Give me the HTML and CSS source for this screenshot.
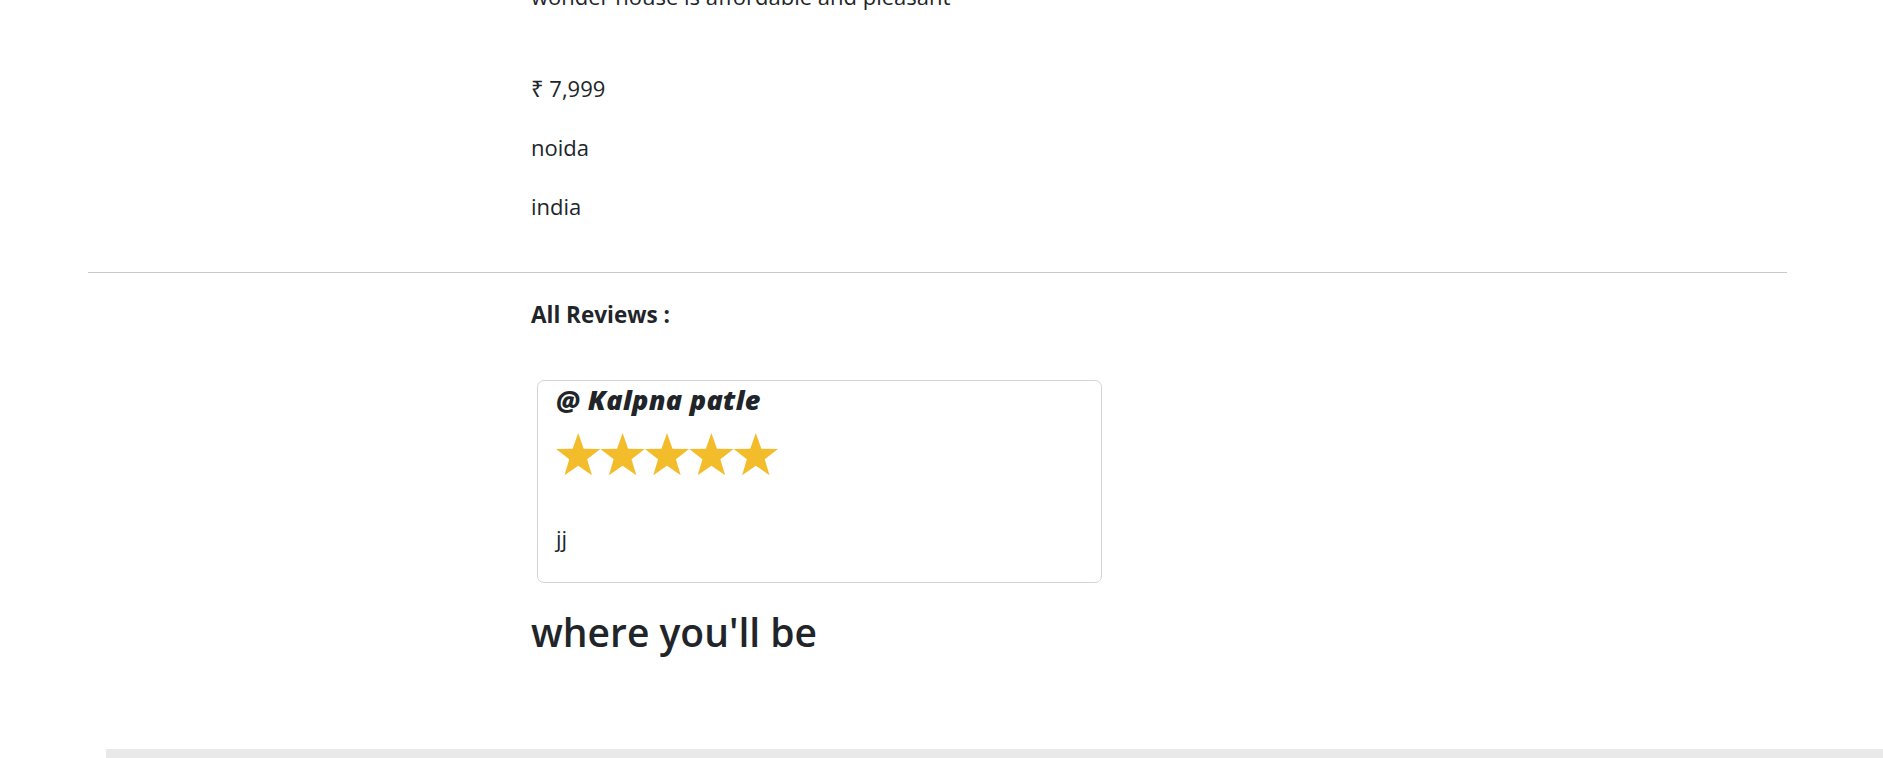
FILE: index.html
```html
<!DOCTYPE html>
<html lang="en">
<head>
<meta charset="utf-8">
<title>Listing</title>
<link rel="stylesheet" href="styles.css">
</head>
<body>
<div class="page">
  <section class="details">
    <p class="desc">wonder house is affordable and pleasant</p>
    <p>&#8377; 7,999</p>
    <p>noida</p>
    <p>india</p>
  </section>
  <hr class="divider">
  <section class="reviews">
    <h4 class="reviews-title">All Reviews :</h4>
    <div class="review-card">
      <h5 class="review-author"><i><b>@ Kalpna patle</b></i></h5>
      <svg class="stars" viewBox="0 0 222 43" aria-label="Rated: 5 stars">
        <defs>
          <polygon id="star" points="0,-23.3 5.53,-7.6 22.16,-7.2 8.94,2.9 13.7,18.85 0,9.4 -13.7,18.85 -8.94,2.9 -22.16,-7.2 -5.53,-7.6"/>
        </defs>
        <g fill="#f3bc2b">
          <use href="#star" transform="translate(22.2,23.3)"/>
          <use href="#star" transform="translate(66.6,23.3)"/>
          <use href="#star" transform="translate(111,23.3)"/>
          <use href="#star" transform="translate(155.4,23.3)"/>
          <use href="#star" transform="translate(199.8,23.3)"/>
        </g>
      </svg>
      <p class="review-text">jj</p>
    </div>
    <h2 class="location-title">where you'll be</h2>
  </section>
  <div class="map"></div>
</div>
</body>
</html>
```

FILE: styles.css
```css
html, body {
  margin: 0;
  padding: 0;
}
body {
  font-family: "Open Sans", "Noto Sans", sans-serif;
  font-size: 22px;
  line-height: 1.5;
  color: #212529;
  background: #ffffff;
  overflow: hidden;
}
.page {
  margin-top: -19px;
}
.details {
  margin-left: 531px;
}
.details p {
  margin: 0 0 29px;
  line-height: 30px;
}
.details .desc {
  margin-bottom: 62px;
}
.details p:last-child {
  margin-bottom: 0;
}
.divider {
  margin: 51px 96px 28px 88px;
  border: 0;
  border-top: 1px solid #c8c9ca;
  height: 0;
}
.reviews {
  margin-left: 531px;
}
.reviews-title {
  font-size: 22.5px;
  font-weight: 700;
  line-height: 1.2;
  margin: 0 0 52px;
}
.review-card {
  margin-left: 6px;
  width: 527px;
  border: 1px solid #d4d4d4;
  border-radius: 7px;
  padding: 4px 18px 29px;
}
.review-author {
  font-size: 27px;
  font-weight: 700;
  letter-spacing: 0.3px;
  line-height: 29px;
  margin: 0 0 19px;
}
.stars {
  display: block;
  width: 222px;
  height: 43px;
}
.review-text {
  margin: 47px 0 0;
  line-height: 30px;
}
.location-title {
  font-size: 39px;
  font-weight: 600;
  line-height: 1.2;
  margin: 26px 0 0;
}
.map {
  margin: 93px 0 0 106px;
  height: 400px;
  background: #e9e9e9;
}
```
